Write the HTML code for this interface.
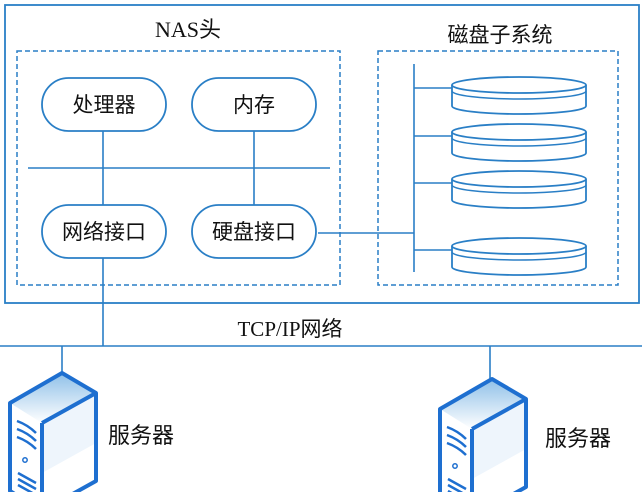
<!DOCTYPE html>
<html><head><meta charset="utf-8"><style>
html,body{margin:0;padding:0;background:#fff;width:642px;height:492px;overflow:hidden}
svg{display:block}
text{font-family:"Liberation Serif","Noto Sans CJK SC",sans-serif;fill:#111}
</style></head><body>
<svg width="642" height="492" viewBox="0 0 642 492" xmlns="http://www.w3.org/2000/svg">
<defs>
<linearGradient id="g" x1="0" y1="0" x2="0" y2="1"><stop offset="0" stop-color="#8fc0e8"/><stop offset="1" stop-color="#ffffff"/></linearGradient>
<g id="srv">
<path d="M0,30 L52,0 L86,20 L32,50 Z" fill="url(#g)"/>
<path d="M32,50 L86,20 L86,70 L32,100 Z" fill="#eef5fc"/>
<path d="M0,30 L52,0 L86,20 L86,108 L32,138 L0,118 Z M32,50 L86,20 M32,50 L32,138" fill="none" stroke="#1e6fd0" stroke-width="4" stroke-linejoin="round"/>
<path d="M7,48 Q18,52 26,60 M7,56 Q18,60 26,68 M7,64 Q18,68 26,76 M8,100 L26,110 M8,106 L26,116 M8,112 L26,122" stroke="#1e6fd0" stroke-width="2.5" fill="none"/>
<circle cx="15" cy="87" r="2.2" fill="none" stroke="#1e6fd0" stroke-width="1.5"/>
</g>
<g id="disk">
<path d="M0,7 L0,28 A67,8 0 0 0 134,28 L134,7" fill="#fff" stroke="#2a7fc6" stroke-width="1.8"/>
<ellipse cx="67" cy="7" rx="67" ry="8" fill="#fff" stroke="#2a7fc6" stroke-width="1.8"/>
<path d="M0,13 A67,8 0 0 0 134,13" fill="none" stroke="#2a7fc6" stroke-width="1.5"/>
</g>
</defs>
<rect x="5" y="5" width="634" height="298" fill="none" stroke="#2a7fc6" stroke-width="1.8"/>
<text x="188" y="37" font-size="22" text-anchor="middle">NAS头</text>
<text x="500" y="42" font-size="21" text-anchor="middle">磁盘子系统</text>
<rect x="17" y="51" width="323" height="234" fill="none" stroke="#2a7fc6" stroke-width="1.5" stroke-dasharray="5,3"/>
<rect x="378" y="51" width="240" height="234" fill="none" stroke="#2a7fc6" stroke-width="1.5" stroke-dasharray="5,3"/>
<g stroke="#2a7fc6" stroke-width="1.6" fill="none">
<line x1="28" y1="168" x2="330" y2="168"/>
<line x1="103" y1="130" x2="103" y2="346"/>
<line x1="254" y1="130" x2="254" y2="205"/>
<line x1="318" y1="233" x2="414" y2="233"/>
<line x1="414" y1="64" x2="414" y2="272"/>
<line x1="414" y1="88" x2="452" y2="88"/>
<line x1="414" y1="136" x2="452" y2="136"/>
<line x1="414" y1="183" x2="452" y2="183"/>
<line x1="414" y1="250" x2="452" y2="250"/>
<line x1="0" y1="346" x2="642" y2="346"/>
<line x1="62" y1="346" x2="62" y2="375"/>
<line x1="490" y1="346" x2="490" y2="380"/>
</g>
<g fill="#fff" stroke="#2a7fc6" stroke-width="1.8">
<rect x="42" y="78" width="124" height="53" rx="26.5"/>
<rect x="192" y="78" width="124" height="53" rx="26.5"/>
<rect x="42" y="205" width="124" height="53" rx="26.5"/>
<rect x="192" y="205" width="124" height="53" rx="26.5"/>
</g>
<g font-size="21" text-anchor="middle">
<text x="104" y="112">处理器</text>
<text x="254" y="112">内存</text>
<text x="104" y="239">网络接口</text>
<text x="254" y="239">硬盘接口</text>
</g>
<use href="#disk" x="452" y="78"/>
<use href="#disk" x="452" y="125"/>
<use href="#disk" x="452" y="172"/>
<use href="#disk" x="452" y="239"/>
<text x="290" y="336" font-size="21" text-anchor="middle">TCP/IP网络</text>
<use href="#srv" x="10" y="373"/>
<use href="#srv" x="440" y="379"/>
<text x="108" y="443" font-size="22">服务器</text>
<text x="545" y="446" font-size="22">服务器</text>
</svg>
</body></html>
